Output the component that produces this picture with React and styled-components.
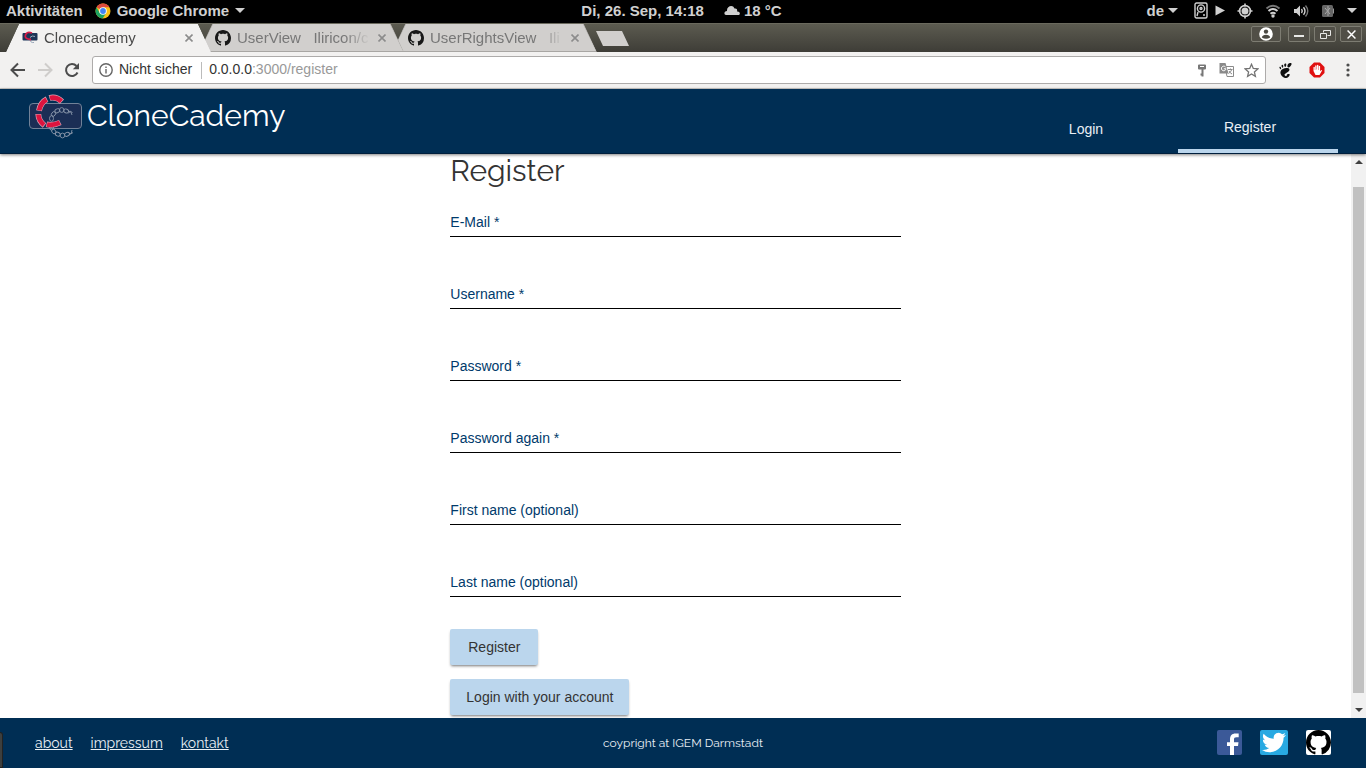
import React from "react";
import styled, { createGlobalStyle, css } from "styled-components";
import { SiGnome } from "react-icons/si";

const NAVY = "#002e54";
const SKY = "#bbd6ed";
const SANS = '"Liberation Sans", Arial, sans-serif';
const DISPLAY = 'Raleway, Lato, "Open Sans", sans-serif';

const GlobalStyle = createGlobalStyle`
  *, *::before, *::after { box-sizing: border-box; }
  body { margin: 0; font-family: ${SANS}; font-size: 14px; background: #fff; }
  button, input { font: inherit; margin: 0; }
  button { border: 0; padding: 0; background: none; color: inherit; cursor: pointer; }
  svg { display: block; flex: none; }
`;

const Desktop = styled.div`
  display: flex;
  flex-direction: column;
  min-height: 100vh;
`;

/* Desktop top bar */

const TopBar = styled.div`
  display: grid;
  grid-template-columns: 1fr auto 1fr;
  align-items: center;
  height: 23px;
  padding: 0 9px 2px 6px;
  background: #000;
  color: #d0d0d0;
  font-size: 15px;
  font-weight: 700;
`;

const BarGroup = styled.div`
  display: flex;
  align-items: center;
  justify-content: ${(p) => (p.$end ? "flex-end" : "flex-start")};
  gap: ${(p) => p.$gap}px;
  white-space: nowrap;
`;

const Caret = styled.span`
  border: 5px solid transparent;
  border-top-color: #d0d0d0;
  border-bottom: 0;
`;

/* Browser window */

const TitleBar = styled.div`
  display: flex;
  justify-content: space-between;
  height: 29px;
  padding: 0 4px 0 6px;
  background: linear-gradient(#5c5b50, #3e3d37);
  border-top: 1px solid #6a695d;
`;

const TabStrip = styled.div`
  display: flex;
  isolation: isolate;
`;

const slant = css`
  clip-path: polygon(13px 0, calc(100% - 13px) 0, 100% 100%, 0 100%);
`;

const BrowserTab = styled.div`
  position: relative;
  z-index: ${(p) => p.$order};
  display: flex;
  align-items: center;
  gap: 6px;
  width: 205px;
  height: 28px;
  padding: 0 16px;
  margin-right: -12px;
  color: ${(p) => (p.$active ? "#4a4a4a" : "#777")};
  font-size: 15px;
  ${slant}

  &::before, &::after {
    content: "";
    position: absolute;
    inset: 0;
    z-index: -2;
    background: ${(p) => (p.$active ? "#f2f1f0" : "#a8a6a3")};
    ${slant}
  }
  &::after {
    inset: 0 1px ${(p) => (p.$active ? 0 : 1)}px;
    z-index: -1;
    background: ${(p) => (p.$active ? "#f2f1f0" : "#d1cfcd")};
  }
`;

const TabTitle = styled.span`
  flex: 1;
  overflow: hidden;
  white-space: pre;
  line-height: 20px;
  mask-image: linear-gradient(to right, #000 calc(100% - 26px), transparent);
`;

const TabClose = styled.button`
  display: flex;
  align-items: center;
  justify-content: center;
  width: 12px;
  height: 16px;
`;

const NewTab = styled.button`
  width: 33px;
  height: 15px;
  margin: 7px 0 0 11px;
  background: #d1cfcd;
  clip-path: polygon(0 0, 26px 0, 100% 100%, 7px 100%);
`;

const WindowButtons = styled.div`
  display: flex;
  gap: 4px;
  padding-top: 2px;
`;

const WindowButton = styled.button`
  display: flex;
  align-items: center;
  justify-content: center;
  width: ${(p) => (p.$wide ? 30 : 22)}px;
  height: 16px;
  margin-right: ${(p) => (p.$wide ? 3 : 0)}px;
  border: 1px solid #7d7c72;
  border-radius: 2px;
  background: #514f47;
  color: #e8e8e6;
`;

const Toolbar = styled.div`
  display: flex;
  align-items: center;
  height: 37px;
  padding: 0 2px 0 10px;
  background: #f2f1f0;
  border-bottom: 1px solid #cbc9c7;
`;

const ToolButton = styled.button`
  display: flex;
  align-items: center;
  justify-content: center;
  width: ${(p) => p.$w || 28}px;
  height: 28px;
  color: #4c4c4c;
`;

const NavButtons = styled.div`
  display: flex;
  width: 82px;
  margin-left: -6px;
  margin-right: 6px;
`;

const AddressBar = styled.div`
  display: flex;
  flex: 1;
  align-items: center;
  height: 28px;
  padding: 0 1px 0 6px;
  margin-right: 4px;
  border: 1px solid #adabaa;
  border-radius: 3px;
  background: #fff;
  color: #333;
`;

const Security = styled.span`
  padding: 0 9px 3px 6px;
  margin-right: 7px;
  border-right: 1px solid #bbb;
  line-height: 14px;
`;

const Url = styled.span`
  flex: 1;
  padding-bottom: 3px;
  color: #999;
  b { color: #333; font-weight: 400; }
`;

/* Site */

const SiteHeader = styled.header`
  position: relative;
  z-index: 1;
  display: flex;
  justify-content: space-between;
  height: 65px;
  padding: 0 28px;
  background: ${NAVY};
  color: #e9eff5;
  border-bottom: 1px solid #001f3d;
  box-shadow: 0 1px 3px rgba(0, 0, 0, 0.5);
`;

const Brand = styled.a`
  display: flex;
  gap: 4px;
  padding-top: 5px;
  height: 54px;
  color: #fff;
  font: 400 30px/44px ${DISPLAY};
  text-decoration: none;
`;

const SiteNav = styled.nav`
  display: flex;
  gap: 12px;
`;

const NavLink = styled.a`
  display: flex;
  align-items: center;
  justify-content: center;
  width: 160px;
  padding-top: 16px;
  color: #e9eff5;
  text-decoration: none;
  ${(p) => p.$active && css`
    padding-right: 16px;
    border-bottom: 4px solid ${SKY};
  `}
`;

const Viewport = styled.div`
  display: flex;
  flex: 1;
`;

const Page = styled.main`
  flex: 1;
  padding-bottom: 2px;
`;

const RegisterForm = styled.form`
  display: flex;
  flex-direction: column;
  align-items: flex-start;
  width: 33.3333%;
  margin: 0 auto;
`;

const Heading = styled.h1`
  margin: 0 0 19px;
  color: #333;
  font: 400 30px/34px ${DISPLAY};
`;

const Field = styled.div`
  display: grid;
  width: 100%;
  height: 72px;
  align-content: start;
  > * { grid-area: 1 / 1; }
`;

const FieldLabel = styled.label`
  padding-top: 5px;
  line-height: 20px;
  color: #003a6b;
`;

const TextInput = styled.input`
  width: 100%;
  height: 30px;
  padding: 4px 0;
  border: 0;
  border-bottom: 1px solid #000;
  background: transparent;
  outline: 0;
`;

const Actions = styled.div`
  display: flex;
  flex-direction: column;
  align-items: flex-start;
  gap: 14px;
  margin-top: -10px;
`;

const RaisedButton = styled.button`
  min-width: 88px;
  height: 36px;
  padding: 0 16px;
  border-radius: 2px;
  background: ${SKY};
  color: #333;
  box-shadow: 0 2px 3px -1px rgba(0, 0, 0, 0.55);
`;

const ScrollTrack = styled.div`
  display: flex;
  flex-direction: column;
  align-items: center;
  justify-content: space-between;
  width: 15px;
  padding: 6px 0;
  background: #f1f1f1;
`;

const ScrollThumb = styled.div`
  flex: 1;
  width: 11px;
  margin: 23px 0 15px;
  background: #c1c1c1;
`;

const ScrollArrow = styled.span`
  border: 4px solid transparent;
  ${(p) => p.$up
    ? css`border-bottom-color: #404040; border-top: 0;`
    : css`border-top-color: #404040; border-bottom: 0;`}
`;

const SiteFooter = styled.footer`
  display: grid;
  grid-template-columns: 1fr auto 1fr;
  align-items: center;
  height: 50px;
  padding: 0 35px 1px;
  background: ${NAVY};
  color: #e9eff5;
  font-family: ${DISPLAY};
`;

const FooterLinks = styled.nav`
  display: flex;
  gap: 18px;
  a { color: #e9eff5; font-size: 14px; line-height: 20px; }
`;

const Copyright = styled.p`
  margin: 0;
  font-size: 12px;
`;

const Social = styled.div`
  display: flex;
  justify-content: flex-end;
  gap: 18px;
`;

const TrayEdge = styled.div`
  position: fixed;
  left: 0;
  bottom: 0;
  width: 3px;
  height: 36px;
  border: 1px solid #222;
  border-left: 0;
  border-radius: 0 3px 0 0;
  background: #3d3f3e;
`;

/* Drawings */

const CAT = "M8 0C3.58 0 0 3.58 0 8c0 3.54 2.29 6.53 5.47 7.59.4.07.55-.17.55-.38 0-.19-.01-.82-.01-1.49-2.01.37-2.53-.49-2.69-.94-.09-.23-.48-.94-.82-1.13-.28-.15-.68-.52-.01-.53.63-.01 1.08.58 1.23.82.72 1.21 1.87.87 2.33.66.07-.52.28-.87.51-1.07-1.78-.2-3.64-.89-3.64-3.95 0-.87.31-1.59.82-2.15-.08-.2-.36-1.02.08-2.12 0 0 .67-.21 2.2.82.64-.18 1.32-.27 2-.27s1.36.09 2 .27c1.53-1.04 2.2-.82 2.2-.82.44 1.1.16 1.92.08 2.12.51.56.82 1.27.82 2.15 0 3.07-1.87 3.75-3.65 3.95.29.25.54.73.54 1.48 0 1.07-.01 1.93-.01 2.2 0 .21.15.46.55.38A8.01 8.01 0 0 0 16 8c0-4.42-3.58-8-8-8z";

const Octocat = ({ size = 16 }) => (
  <svg width={size} height={size} viewBox="0 0 16 16" fill="#181818"><path d={CAT} /></svg>
);

const Chrome = () => (
  <svg width="16" height="16" viewBox="0 0 16 16">
    <circle cx="8" cy="8" r="7.5" fill="#fbc116" />
    <path d="M8 8 1.5 4.25A7.5 7.5 0 0 1 14.5 4.25H8z" fill="#dd4b3e" />
    <path d="M1.5 4.25A7.5 7.5 0 0 0 7.6 15.5L11.2 9.9 8 8 4.7 9.7z" fill="#1da462" />
    <circle cx="8" cy="8" r="3.8" fill="#fff" />
    <circle cx="8" cy="8" r="2.9" fill="#4285f4" />
  </svg>
);

const Logo = () => (
  <svg width="55" height="46" viewBox="0 0 55 46" fill="none">
    <rect x="1.5" y="9.5" width="52" height="25" rx="3.5" fill="#1b2e55" stroke="#718298" />
    <g stroke="#8794a8" strokeWidth="0.9">
      <ellipse cx="23.5" cy="24.500" rx="2" ry="2.800" />
      <ellipse cx="25.500" cy="20" rx="1.900" ry="2.500" transform="rotate(35 25.500 20)" />
      <ellipse cx="29.300" cy="16.800" rx="2.500" ry="1.900" transform="rotate(-30 29.300 16.800)" />
      <ellipse cx="33.700" cy="16" rx="2.200" ry="2.400" />
      <ellipse cx="38.200" cy="17" rx="2.500" ry="1.900" transform="rotate(25 38.200 17)" />
      <path d="M40.500 19q2-3 4-.5M40.500 17q3 0 3.500 4" />
      <ellipse cx="23.500" cy="33.500" rx="2" ry="2.600" />
      <ellipse cx="25.800" cy="37.500" rx="1.900" ry="2.500" transform="rotate(-40 25.800 37.500)" />
      <ellipse cx="29.800" cy="40.200" rx="2.500" ry="1.900" transform="rotate(25 29.800 40.200)" />
      <ellipse cx="34.500" cy="41.500" rx="2.200" ry="2.400" />
      <ellipse cx="39" cy="40.300" rx="2.500" ry="1.900" transform="rotate(-25 39 40.300)" />
      <path d="M41 39q2 2 4-.5M41 41q3-1 3-5" />
    </g>
    <g stroke="#d9a9bb" strokeWidth="5.800">
      <path d="M21.500 4Q28 2 34 7.700M19 5.200Q12.500 8.500 11 16.800M10.300 20Q10.500 27 16.500 31.500M18.500 30.300Q25 32 32.300 28.500" />
    </g>
    <g stroke="#dc143f" strokeWidth="4.600">
      <path d="M22 4Q28 2.500 33.500 7.200M18.500 5.500Q12.500 9 11.200 16.300M10.400 20.500Q10.700 26.800 16 31M19 30.400Q25 31.800 31.800 28.700" />
    </g>
  </svg>
);

const Favicon = () => (
  <svg width="16" height="16" viewBox="0 0 16 16" fill="none">
    <rect x="0.500" y="3" width="15" height="7.500" rx="1" fill="#1d3557" />
    <path d="M8 7.500Q10 5 13 6.500M8 9Q8 13 12 12.500" stroke="#9aa9bb" />
    <path d="M10 3Q5 1 3.500 5T9 9.500" stroke="#d81b45" strokeWidth="1.800" />
  </svg>
);

const Cross = ({ color = "#8c8c8c", size = 8, w = 1.6 }) => (
  <svg width={size} height={size} viewBox="0 0 8 8" stroke={color} strokeWidth={w}>
    <path d="M0.5 0.5l7 7M7.500 0.500l-7 7" />
  </svg>
);

const Cloud = () => (
  <svg width="16" height="11" viewBox="0 0 16 11" fill="#d0d0d0">
    <path d="M2 10C-.5 9.500 0 6 3 6 2.500 1 9 -1 10.500 3.500 13 3 13.500 5 13 6.500 16.500 6 16.500 10 14.500 10z" />
  </svg>
);

const Drive = () => (
  <svg width="14" height="17" viewBox="0 0 14 17" fill="none" stroke="#d0d0d0" strokeWidth="1.400">
    <rect x="1" y="1" width="12" height="15" rx="1.500" />
    <circle cx="7" cy="6.500" r="3.600" /><circle cx="7" cy="6.500" r="1" />
    <path d="M4 10l-1 4M9 13h2" />
  </svg>
);

const Play = () => (
  <svg width="10" height="11" viewBox="0 0 10 11" fill="#d0d0d0"><path d="M0.500 0.500v10l9.500-5z" /></svg>
);

const Target = () => (
  <svg width="16" height="16" viewBox="0 0 16 16" fill="none" stroke="#d0d0d0" strokeWidth="1.600">
    <circle cx="8" cy="8" r="5.400" /><circle cx="8" cy="8" r="2.700" fill="#d0d0d0" />
    <path d="M8 0.500v3M8 12.500v3M0.500 8h3M12.500 8h3" />
  </svg>
);

const Wifi = () => (
  <svg width="16" height="14" viewBox="0 0 16 14" fill="none" strokeWidth="2">
    <path d="M1.500 4.500q6.500-5.500 13 0" stroke="#777" />
    <path d="M3.500 7q4.500-4 9 0M5.500 9.800q2.500-2.200 5 0" stroke="#d0d0d0" />
    <circle cx="8" cy="12" r="1.700" fill="#d0d0d0" />
  </svg>
);

const Volume = () => (
  <svg width="16" height="14" viewBox="0 0 16 14" fill="none" stroke="#d0d0d0" strokeWidth="1.400">
    <path d="M1 5v4h2.500L7 12.500v-11L3.500 5z" fill="#d0d0d0" stroke="none" />
    <path d="M8.500 5q1.500 2 0 4M10.500 3.200q3 3.800 0 7.600" />
    <path d="M12.500 1.500q4.500 5.500 0 11" stroke="#777" />
  </svg>
);

const Battery = () => (
  <svg width="14" height="14" viewBox="0 0 14 14">
    <rect x="1" y="1" width="11" height="12" rx="1.500" fill="#666" />
    <path d="M12.500 4.500v5" stroke="#999" /><path d="M4 4l5 6M7 2v10M9 4l-5 6" stroke="#aaa" fill="none" />
  </svg>
);

const Person = () => (
  <svg width="14" height="14" viewBox="0 0 14 14">
    <circle cx="7" cy="7" r="6.800" fill="#fff" />
    <circle cx="7" cy="4.600" r="2.200" fill="#4b4a43" />
    <path d="M2.800 10.400Q3.500 7.700 7 7.700t4.200 2.700Q7 13 2.800 10.400z" fill="#4b4a43" />
  </svg>
);

const Restore = () => (
  <svg width="11" height="9" viewBox="0 0 11 9" fill="none" stroke="currentColor">
    <path d="M3.500 2.500v-2h7v5h-3M0.500 3.500h6v5h-6z" />
  </svg>
);

const Arrow = ({ color, flip }) => (
  <svg width="16" height="16" viewBox="0 0 16 16" fill="none" stroke={color} strokeWidth="2">
    <path d={flip ? "M1 8h13M8 1.500l6.500 6.500-6.500 6.500" : "M15 8H2M8 1.500L1.500 8l6.500 6.500"} />
  </svg>
);

const Reload = () => (
  <svg width="16" height="16" viewBox="0 0 16 16" fill="none" stroke="#4c4c4c" strokeWidth="2">
    <path d="M13.500 10.500A6 6 0 1 1 12.500 4" /><path d="M15 1v6.200H8.800z" fill="#4c4c4c" stroke="none" />
  </svg>
);

const Info = () => (
  <svg width="14" height="14" viewBox="0 0 14 14" fill="none" stroke="#666" strokeWidth="1.400">
    <circle cx="7" cy="7" r="6.200" /><path d="M7 6v4.500M7 3.500v1.500" />
  </svg>
);

const Key = () => (
  <svg width="10" height="13" viewBox="0 0 10 13" fill="#777">
    <path d="M1 1.500Q1 .5 2 .5h6q1 0 1 1V4.500q0 1-1 1H6.500V12.500H4.500V11.500H3.500V9.500H4.500V5.500H2q-1 0-1-1z" /><path d="M3 2.500h4" stroke="#fff" />
  </svg>
);

const Translate = () => (
  <svg width="15" height="14" viewBox="0 0 15 14" fill="none">
    <path d="M6 3.500h8.500v10H8z" fill="#fff" stroke="#8a8a8a" />
    <path d="M0.500 0h6l3 10.500h-9z" fill="#8a8a8a" />
    <path d="M6.500 4A2.300 2.300 0 1 0 7 5.800H4.800" stroke="#fff" />
    <path d="M9 6.500h4.500M11.500 5.500v1M12.800 6.500Q12 9 9.500 10.500M10 8q1 2 3 3" stroke="#8a8a8a" />
  </svg>
);

const Star = () => (
  <svg width="15" height="15" viewBox="0 0 15 15" fill="none" stroke="#737373" strokeWidth="1.300">
    <path d="M7.500 1.300l1.800 4.200 4.500.4-3.400 3 1 4.500-3.900-2.400-3.900 2.400 1-4.500-3.400-3 4.500-.4z" />
  </svg>
);

const AdBlock = () => (
  <svg width="16" height="16" viewBox="0 0 16 16">
    <path d="M5 0.500h6L15.500 5v6L11 15.500H5L0.500 11V5z" fill="#e01010" />
    <path d="M4.500 9V5.200q.7-.8 1.300 0V8h.4V3.700q.7-.9 1.400 0V7.500H8V3.200q.7-.9 1.400 0V8h.4V4.200q.7-.8 1.300 0v5l1-1q1-.3 1 .4L10.500 13h-4z" fill="#fff" />
  </svg>
);

const Dots = () => (
  <svg width="4" height="14" viewBox="0 0 4 14" fill="#4c4c4c">
    <circle cx="2" cy="2" r="1.600" /><circle cx="2" cy="7" r="1.600" /><circle cx="2" cy="12" r="1.600" />
  </svg>
);

const Facebook = () => (
  <svg width="25" height="25" viewBox="0 0 25 25">
    <rect width="25" height="25" rx="2" fill="#3b5998" />
    <path d="M13 25v-9h-3v-3.800h3V9.500C13 5.500 15 3.500 18.500 3.500h3.200v3.700h-2.200c-2 0-2.500.8-2.500 2.300v2.700h4.500L21 16h-4v9z" fill="#fff" />
  </svg>
);

const Twitter = () => (
  <svg width="28" height="25" viewBox="0 0 28 25">
    <rect width="28" height="25" rx="2" fill="#28a9e2" />
    <path transform="translate(2 .5)" d="M23.950 4.570a10 10 0 0 1-2.820.77 4.960 4.960 0 0 0 2.160-2.720 9.900 9.900 0 0 1-3.120 1.180 4.920 4.920 0 0 0-8.380 4.480C7.690 8.090 4.070 6.130 1.640 3.160a4.820 4.820 0 0 0-.67 2.480c0 1.710.87 3.210 2.190 4.100a4.900 4.900 0 0 1-2.230-.62v.06a4.920 4.920 0 0 0 3.950 4.830 4.900 4.900 0 0 1-2.210.08 4.940 4.940 0 0 0 4.600 3.420A9.870 9.870 0 0 1 0 19.540a14 14 0 0 0 7.550 2.210c9.050 0 14-7.500 14-13.980 0-.21 0-.42-.02-.63a9.940 9.940 0 0 0 2.460-2.550z" fill="#fff" />
  </svg>
);

const Github = () => (
  <svg width="25" height="25" viewBox="0 0 16 16">
    <rect width="16" height="16" rx="1.300" fill="#fff" /><path d={CAT} fill="#000" />
  </svg>
);

const TABS = [
  { title: "Clonecademy", icon: <Favicon />, active: true },
  { title: "UserView\u00a0\u00a0\u00a0Iliricon/c", icon: <Octocat /> },
  { title: "UserRightsView\u00a0\u00a0\u00a0Ili", icon: <Octocat /> },
];

const FIELDS = [
  { id: "email", label: "E-Mail *", type: "email" },
  { id: "username", label: "Username *", type: "text" },
  { id: "password", label: "Password *", type: "password" },
  { id: "password-again", label: "Password again *", type: "password" },
  { id: "first-name", label: "First name (optional)", type: "text" },
  { id: "last-name", label: "Last name (optional)", type: "text" },
];

export default function App() {
  return (
    <Desktop>
      <GlobalStyle />
      <TopBar>
        <BarGroup $gap={12}>
          <span>Aktivitäten</span>
          <BarGroup $gap={6}><Chrome /><span>Google Chrome</span><Caret /></BarGroup>
        </BarGroup>
        <BarGroup $gap={20}>
          <span>Di, 26. Sep, 14:18</span>
          <BarGroup $gap={4}><Cloud /><span>18 °C</span></BarGroup>
        </BarGroup>
        <BarGroup $gap={12} $end>
          <BarGroup $gap={16}>
            <BarGroup $gap={4}><span>de</span><Caret /></BarGroup>
            <BarGroup $gap={7}><Drive /><Play /></BarGroup>
          </BarGroup>
          <Target /><Wifi /><Volume /><Battery /><Caret />
        </BarGroup>
      </TopBar>

      <TitleBar>
        <TabStrip>
          {TABS.map((tab, i) => (
            <BrowserTab key={tab.title} $active={tab.active} $order={TABS.length - i}>
              {tab.icon}
              <TabTitle>{tab.title}</TabTitle>
              <TabClose aria-label="Close tab"><Cross /></TabClose>
            </BrowserTab>
          ))}
          <NewTab aria-label="New tab" />
        </TabStrip>
        <WindowButtons>
          <WindowButton $wide aria-label="Profile"><Person /></WindowButton>
          <WindowButton aria-label="Minimize">
            <svg width="10" height="8" viewBox="0 0 10 8"><path d="M0 6h10" stroke="currentColor" strokeWidth="2" /></svg>
          </WindowButton>
          <WindowButton aria-label="Restore"><Restore /></WindowButton>
          <WindowButton aria-label="Close"><Cross color="#fff" size={9} w={1.3} /></WindowButton>
        </WindowButtons>
      </TitleBar>

      <Toolbar>
        <NavButtons>
          <ToolButton aria-label="Back"><Arrow color="#4c4c4c" /></ToolButton>
          <ToolButton aria-label="Forward"><Arrow color="#cfcdcb" flip /></ToolButton>
          <ToolButton aria-label="Reload"><Reload /></ToolButton>
        </NavButtons>
        <AddressBar>
          <Info />
          <Security>Nicht sicher</Security>
          <Url><b>0.0.0.0</b>:3000/register</Url>
          <ToolButton $w={25} aria-label="Saved passwords"><Key /></ToolButton>
          <ToolButton $w={25} aria-label="Translate"><Translate /></ToolButton>
          <ToolButton $w={25} aria-label="Bookmark"><Star /></ToolButton>
        </AddressBar>
        <ToolButton $w={31} aria-label="GNOME extensions"><SiGnome size={15} color="#111" /></ToolButton>
        <ToolButton $w={31} aria-label="Ad blocker"><AdBlock /></ToolButton>
        <ToolButton $w={32} aria-label="Menu"><Dots /></ToolButton>
      </Toolbar>

      <SiteHeader>
        <Brand href="#home"><Logo />CloneCademy</Brand>
        <SiteNav>
          <NavLink href="#login">Login</NavLink>
          <NavLink href="#register" $active>Register</NavLink>
        </SiteNav>
      </SiteHeader>

      <Viewport>
        <Page>
          <RegisterForm onSubmit={(e) => e.preventDefault()}>
            <Heading>Register</Heading>
            {FIELDS.map((f) => (
              <Field key={f.id}>
                <FieldLabel htmlFor={f.id}>{f.label}</FieldLabel>
                <TextInput id={f.id} type={f.type} />
              </Field>
            ))}
            <Actions>
              <RaisedButton type="submit">Register</RaisedButton>
              <RaisedButton type="button">Login with your account</RaisedButton>
            </Actions>
          </RegisterForm>
        </Page>
        <ScrollTrack aria-hidden="true"><ScrollArrow $up /><ScrollThumb /><ScrollArrow /></ScrollTrack>
      </Viewport>

      <SiteFooter>
        <FooterLinks>
          <a href="#about">about</a>
          <a href="#impressum">impressum</a>
          <a href="#kontakt">kontakt</a>
        </FooterLinks>
        <Copyright>coypright at IGEM Darmstadt</Copyright>
        <Social>
          <a href="#facebook" aria-label="Facebook"><Facebook /></a>
          <a href="#twitter" aria-label="Twitter"><Twitter /></a>
          <a href="#github" aria-label="GitHub"><Github /></a>
        </Social>
      </SiteFooter>
      <TrayEdge />
    </Desktop>
  );
}
